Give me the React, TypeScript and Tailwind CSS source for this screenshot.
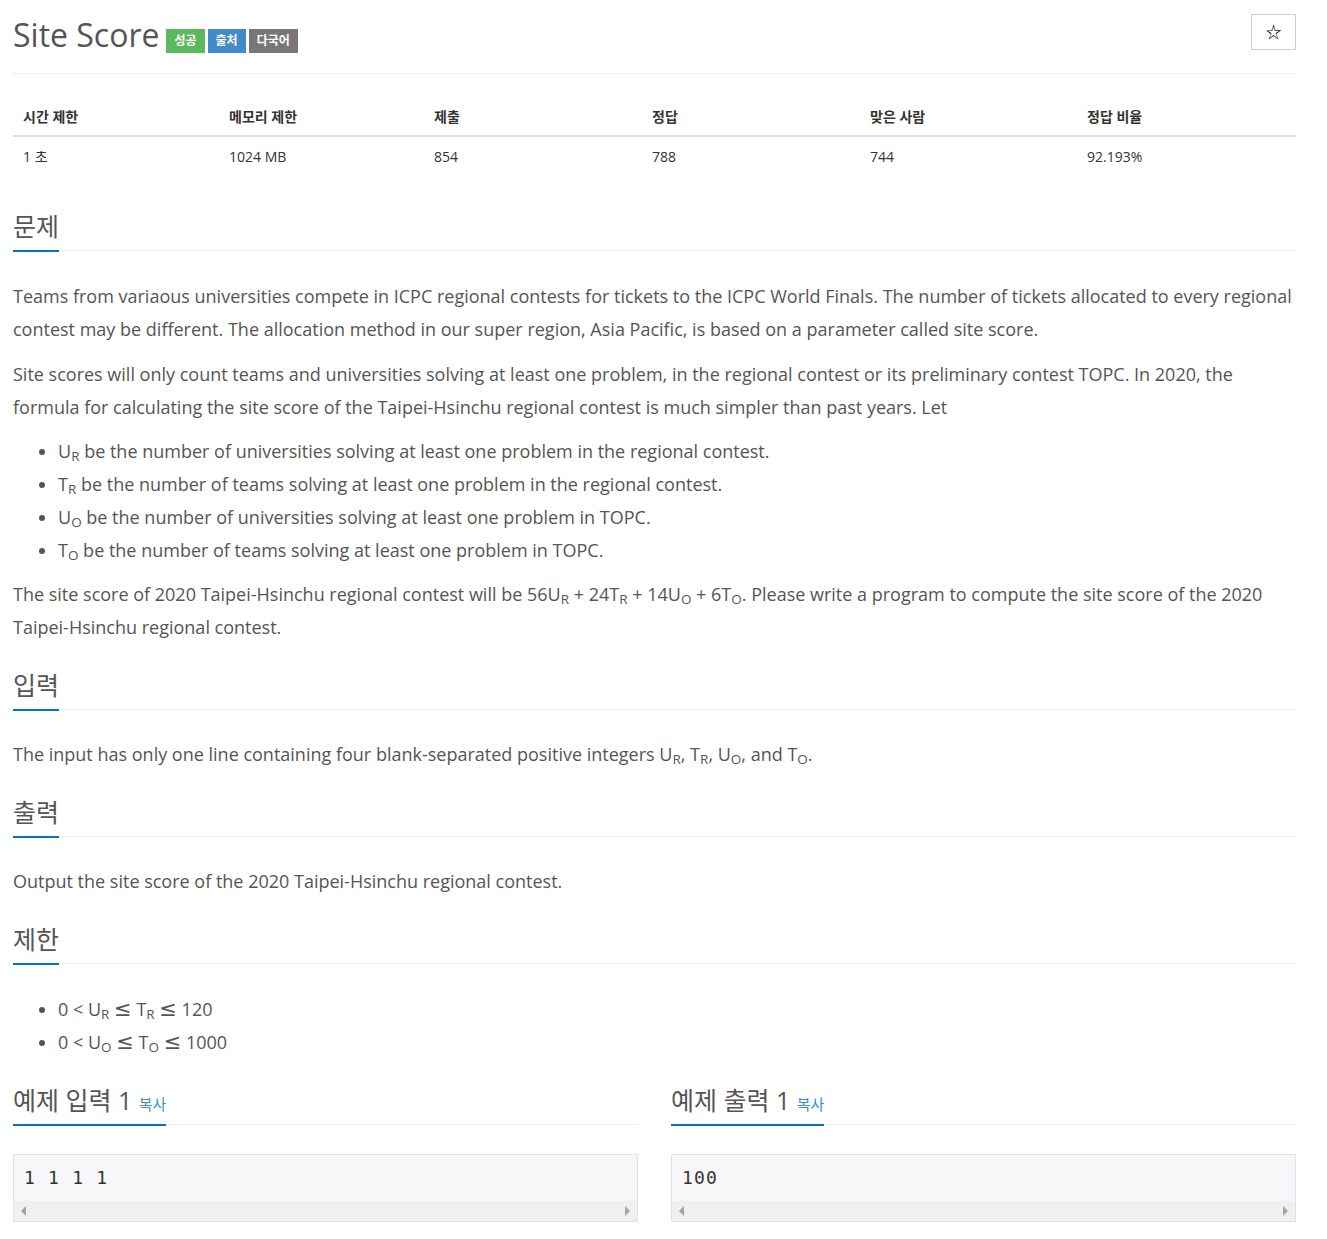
import React from "react";

const sans = "font-['Open_Sans','Noto_Sans_CJK_KR',sans-serif]";

const Headline = ({ children }: { children: React.ReactNode }) => (
  <div className="h-[42px] border-b border-[#eee]">
    <h2 className="inline-block h-[43px] overflow-hidden border-b-2 border-[#0076c0] text-[25px] leading-[34px] whitespace-nowrap text-[#555]">
      {children}
    </h2>
  </div>
);

const Le = () => <span className="font-['DejaVu_Sans',sans-serif] text-[21px] leading-none">≤</span>;

const Sample = ({ title, text }: { title: string; text: string }) => (
  <div>
    <Headline>
      {title} <span className="text-[15px] leading-none text-[#428bca]">복사</span>
    </Headline>
    <div className="mt-[29px] border border-[#e1e1e8] bg-[#f7f7f9]">
      <div className="h-[46px] pl-[10px] pt-[11px] font-['DejaVu_Sans_Mono',monospace] text-[18px] leading-[24px] tracking-[1.2px] text-[#333] whitespace-pre">
        {text}
      </div>
      <div className="flex h-[20px] items-center justify-between bg-[#f0f0f0] px-[7px]">
        <span className="h-0 w-0 border-y-[5px] border-r-[5px] border-y-transparent border-r-[#a3a3a3]" />
        <span className="h-0 w-0 border-y-[5px] border-l-[5px] border-y-transparent border-l-[#a3a3a3]" />
      </div>
    </div>
  </div>
);

const App = () => {
  const stats = [
    ["시간 제한", "1 초"],
    ["메모리 제한", "1024 MB"],
    ["제출", "854"],
    ["정답", "788"],
    ["맞은 사람", "744"],
    ["정답 비율", "92.193%"],
  ];

  return (
    <div className={`min-h-screen bg-white ${sans}`}>
      <div className="ml-[13px] w-[1283px] pb-10">
        {/* Title */}
        <div className="flex items-start justify-between border-b border-[#eee] pt-[14px] pb-[18px]">
          <div className="mt-px flex h-[40px] items-end">
            <h1 className="self-center text-[32px] leading-[40px] text-[#555]">Site Score</h1>
            <div className="mb-[2px] ml-[7px] flex gap-[3px] text-[12px] font-bold leading-[24px] text-white">
              <span className="bg-[#5cb85c] px-[8px]">성공</span>
              <span className="bg-[#428bca] px-[8px]">출처</span>
              <span className="bg-[#777] px-[8px]">다국어</span>
            </div>
          </div>
          <button className="flex h-[36px] w-[45px] items-center justify-center border border-[#ccc] text-[16px] text-black">
            ☆
          </button>
        </div>

        {/* Stats table */}
        <div className="mt-[24px] text-[14px] text-[#333]">
          <div className="grid h-[39px] grid-cols-[206px_205px_218px_218px_217px_1fr] items-center border-b-2 border-[#ddd] font-bold">
            {stats.map(([h]) => (
              <div key={h} className="pl-[10px]">{h}</div>
            ))}
          </div>
          <div className="grid h-[39px] grid-cols-[206px_205px_218px_218px_217px_1fr] items-center">
            {stats.map(([h, v]) => (
              <div key={h} className="pl-[10px]">{v}</div>
            ))}
          </div>
        </div>

        {/* 문제 */}
        <section className="mt-[33px]">
          <Headline>문제</Headline>
          <div className="mt-[29px] text-[18px] leading-[33px] text-[#555]">
            <p>
              Teams from variaous universities compete in ICPC regional contests for tickets to the ICPC World Finals. The number of tickets allocated to every regional contest may be different. The allocation method in our super region, Asia Pacific, is based on a parameter called site score.
            </p>
            <p className="mt-[12px]">
              Site scores will only count teams and universities solving at least one problem, in the regional contest or its preliminary contest TOPC. In 2020, the formula for calculating the site score of the Taipei-Hsinchu regional contest is much simpler than past years. Let
            </p>
            <ul className="mt-[11px] list-disc pl-[45px]">
              <li>U<sub>R</sub> be the number of universities solving at least one problem in the regional contest.</li>
              <li>T<sub>R</sub> be the number of teams solving at least one problem in the regional contest.</li>
              <li>U<sub>O</sub> be the number of universities solving at least one problem in TOPC.</li>
              <li>T<sub>O</sub> be the number of teams solving at least one problem in TOPC.</li>
            </ul>
            <p className="mt-[11px]">
              The site score of 2020 Taipei-Hsinchu regional contest will be 56U<sub>R</sub> + 24T<sub>R</sub> + 14U<sub>O</sub> + 6T<sub>O</sub>. Please write a program to compute the site score of the 2020 Taipei-Hsinchu regional contest.
            </p>
          </div>
        </section>

        {/* 입력 */}
        <section className="mt-[24px]">
          <Headline>입력</Headline>
          <p className="mt-[28px] text-[18px] leading-[33px] text-[#555]">
            The input has only one line containing four blank-separated positive integers U<sub>R</sub>, T<sub>R</sub>, U<sub>O</sub>, and T<sub>O</sub>.
          </p>
        </section>

        {/* 출력 */}
        <section className="mt-[24px]">
          <Headline>출력</Headline>
          <p className="mt-[28px] text-[18px] leading-[33px] text-[#555]">
            Output the site score of the 2020 Taipei-Hsinchu regional contest.
          </p>
        </section>

        {/* 제한 */}
        <section className="mt-[24px]">
          <Headline>제한</Headline>
          <ul className="mt-[29px] list-disc pl-[45px] text-[18px] leading-[33px] text-[#555]">
            <li className="h-[33px]">0 &lt; U<sub>R</sub> <Le /> T<sub>R</sub> <Le /> 120</li>
            <li className="h-[33px]">0 &lt; U<sub>O</sub> <Le /> T<sub>O</sub> <Le /> 1000</li>
          </ul>
        </section>

        {/* 예제 */}
        <div className="mt-[24px] grid grid-cols-2 gap-[33px]">
          <Sample title="예제 입력 1" text="1 1 1 1" />
          <Sample title="예제 출력 1" text="100" />
        </div>
      </div>
    </div>
  );
};

export default App;
